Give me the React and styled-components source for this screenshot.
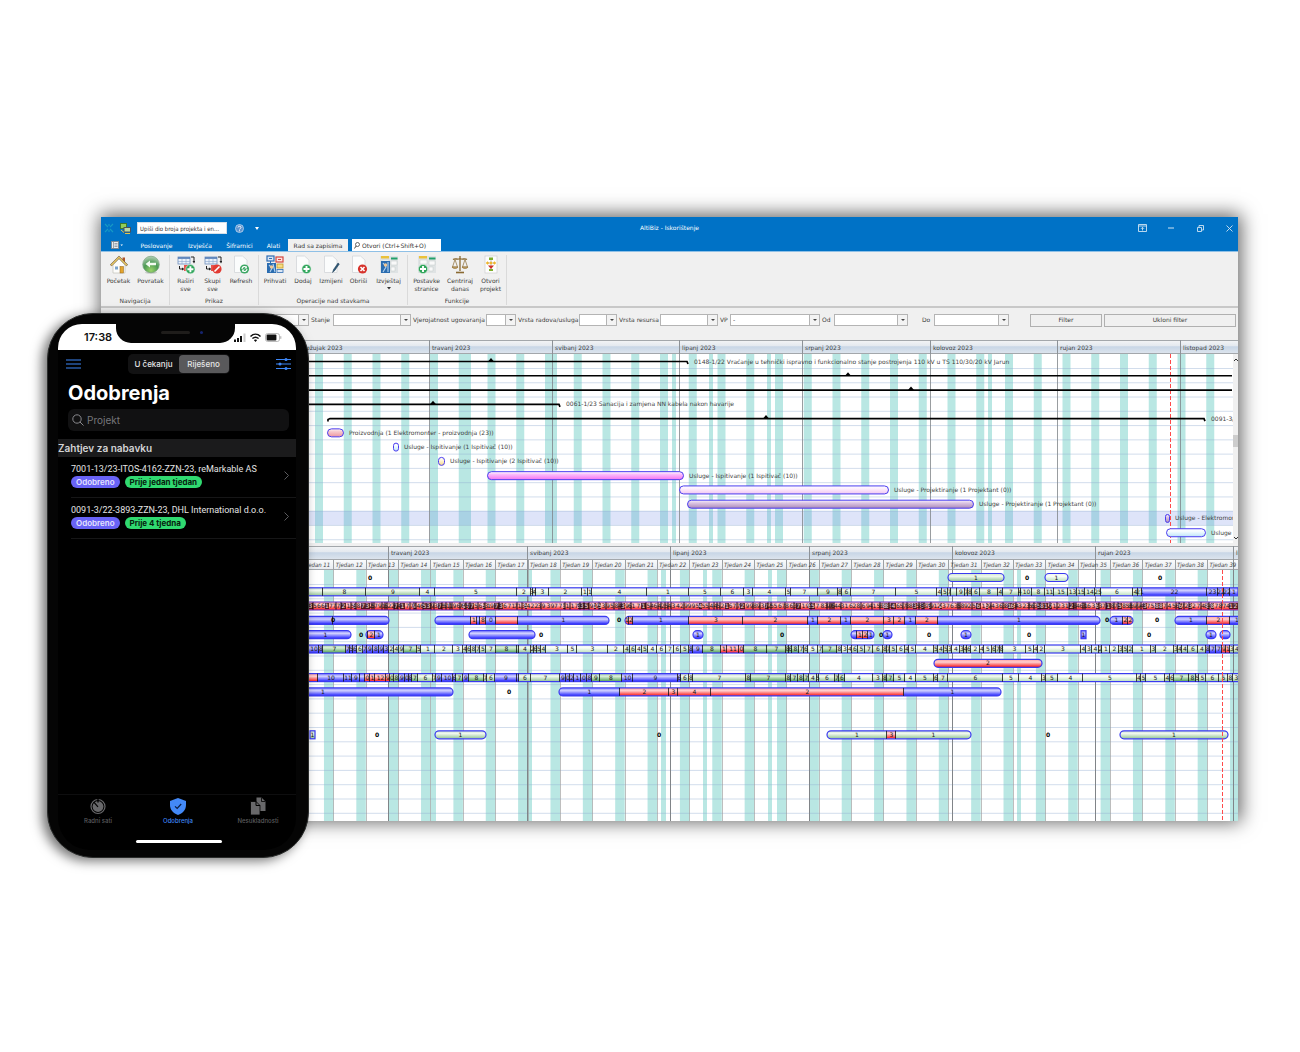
import React from "react";
import styled, { createGlobalStyle, css } from "styled-components";

const DESKTOP_FONT = '"DejaVu Sans", Verdana, sans-serif';
const NARROW_FONT = '"DejaVu Sans Condensed", "DejaVu Sans", sans-serif';
const PHONE_FONT = 'Inter, "Liberation Sans", sans-serif';
const BLUE = "#0072c6";

const Global = createGlobalStyle`
  * { box-sizing: border-box; }
  body { margin: 0; background: #fff; }
  button, input, select { font: inherit; color: inherit; margin: 0; }
`;

const Page = styled.main`
  position: relative;
  min-height: 100vh;
  padding: 217px 62px 60px 101px;
`;

/* ---------- desktop window ---------- */

const Window = styled.section`
  display: flex;
  flex-direction: column;
  background: #f0f0f0;
  color: #3c3c3c;
  font: 6px/8px ${DESKTOP_FONT};
  box-shadow: 1px -1px 18px 2px rgba(0, 0, 0, 0.62);
`;

const TitleBar = styled.header`
  display: grid;
  grid-template-columns: 1fr auto 1fr;
  align-items: center;
  height: 22px;
  background: ${BLUE};
  color: #fff;
`;

const QuickAccess = styled.div`
  display: flex;
  align-items: center;
  gap: 6px;
  padding-left: 3px;
`;

const QuickInput = styled.input`
  width: 90px;
  height: 12px;
  padding: 0 2px;
  border: 1px solid #d5dfe8;
  border-radius: 0;
  background: #fff;
  color: #333;
  font-family: ${NARROW_FONT};
`;

const Title = styled.h1`
  margin: 0;
  font-size: 6px;
  font-weight: 400;
`;

const WindowButtons = styled.div`
  display: flex;
  justify-content: flex-end;
  gap: 17px;
  padding-right: 3px;
`;

const IconButton = styled.button`
  display: grid;
  place-items: center;
  width: ${(p) => p.$w || 12}px;
  height: 12px;
  padding: 0;
  border: 0;
  background: none;
  color: inherit;
`;

const TabBar = styled.nav`
  display: flex;
  height: 13px;
  background: ${BLUE};
  border-bottom: 1px solid #8fc0e6;
  color: #fff;
`;

const Tab = styled.button`
  width: ${(p) => p.$w}px;
  padding: 1px 0 0;
  border: 0;
  white-space: nowrap;
  background: ${(p) => (p.$active ? "#f0f0f0" : "none")};
  color: ${(p) => (p.$active ? "#333" : "#fff")};
`;

const CommandSearch = styled.label`
  display: flex;
  align-items: center;
  gap: 2px;
  width: 89px;
  margin-left: 4px;
  padding: 1px 2px 0;
  background: #fff;
  color: #333;
  input {
    flex: 1;
    min-width: 0;
    padding: 0;
    border: 0;
    background: none;
  }
  input::placeholder { color: #333; opacity: 1; }
`;

const Ribbon = styled.div`
  display: flex;
  height: 56px;
  padding-top: 3px;
  border-bottom: 2px solid #c8c8c8;
`;

const Group = styled.div`
  display: flex;
  flex-direction: column;
  padding: 0 2px;
  margin-bottom: 1px;
  border-right: 1px solid #dadada;
`;

const GroupTools = styled.div`
  display: flex;
  flex: 1;
`;

const GroupName = styled.div`
  text-align: center;
`;

const Tool = styled.button`
  display: flex;
  flex-direction: column;
  align-items: center;
  width: ${(p) => p.$w}px;
  padding: 0;
  border: 0;
  background: none;
  line-height: 8px;
  white-space: nowrap;
  svg { flex: none; margin-bottom: 2px; }
`;

const Filters = styled.form`
  display: flex;
  align-items: center;
  height: 32px;
  padding: 0 2px 8px 8px;
`;

const Field = styled.label`
  display: flex;
  align-items: center;
  white-space: nowrap;
  margin-left: ${(p) => p.$gap || 2}px;
`;

const FieldName = styled.span`
  width: ${(p) => p.$w}px;
`;

const SelectBox = styled.span`
  position: relative;
  display: block;
  width: ${(p) => p.$w}px;
  height: 12px;
  border: 1px solid #b4b4b4;
  background: #fff;
  select {
    appearance: none;
    display: block;
    width: 100%;
    height: 10px;
    padding: 0 2px;
    border: 0;
    border-radius: 0;
    background: none;
  }
  &::before {
    content: "";
    position: absolute;
    inset: 0 0 0 auto;
    width: 9px;
    border-left: 1px solid #b4b4b4;
    background: #f3f3f3;
    pointer-events: none;
  }
  &::after {
    content: "";
    position: absolute;
    right: 2px;
    top: 4px;
    border: 2px solid transparent;
    border-top-color: #444;
    border-bottom: 0;
    pointer-events: none;
  }
`;

const FilterButton = styled.button`
  height: 13px;
  padding: 0;
  border: 1px solid #b0b0b0;
  background: #f0f0f0;
  ${(p) =>
    p.$grow
      ? css`
          flex: 1;
          margin-left: 2px;
        `
      : css`
          width: 72px;
          margin-left: 21px;
        `}
`;

const Charts = styled.div`
  display: flex;
  flex-direction: column;
  gap: 3px;
`;

const ChartSvg = styled.svg`
  display: block;
  width: 100%;
  height: ${(p) => p.$h}px;
  overflow: hidden;
  text { font: 6px ${DESKTOP_FONT}; fill: #3f3f3f; }
  .week { font-family: ${NARROW_FONT}; font-style: italic; }
  .mid { text-anchor: middle; }
  .num { text-anchor: middle; fill: #151515; }
  .pale { text-anchor: middle; fill: #f3dcdc; }
  .free { text-anchor: middle; fill: #000; font-weight: 700; }
`;

/* ---------- ribbon icons ---------- */

const Svg = ({ w = 18, h = 20, vb = "0 0 18 20", children }) => (
  <svg width={w} height={h} viewBox={vb} fill="none" aria-hidden="true">
    {children}
  </svg>
);

const Plus = ({ x, y }) => (
  <g>
    <circle cx={x} cy={y} r="4.6" fill="#2fa55a" stroke="#d8efe0" strokeWidth=".6" />
    <path d={`M${x - 3} ${y}h6M${x} ${y - 3}v6`} stroke="#fff" strokeWidth="1.9" />
  </g>
);

const Sheet = () => (
  <path d="M2.500 1h8l4.500 4v12.500H2.500z" fill="#fbfcfc" stroke="#d3d6d9" strokeWidth=".8" />
);

const TableArrows = () => (
  <g>
    <rect x="1" y="2" width="12" height="7" fill="#eaf1fa" stroke="#6f90bd" strokeWidth=".8" />
    <path d="M1 3h12" stroke="#4d78b4" strokeWidth="1.6" />
    <path d="M5 4v5M9 4v5M1 6.500h12" stroke="#8aa7cf" strokeWidth=".6" />
    <path d="M14 2h3v5M2.500 11v3h3" stroke="#222" strokeWidth="1" />
    <path d="M15.500 6h3l-1.500 2.500zM5 12.500v3l2.500-1.500z" fill="#222" />
    <rect x="7" y="10" width="5" height="6" fill="#e8554e" />
  </g>
);

const Panels = () => (
  <g>
    <rect x="0" y="1" width="18" height="17" fill="#dfe3e4" />
    <rect x="1" y="1" width="8" height="2.500" fill="#eac13a" />
    <rect x="11" y="2.500" width="6.500" height="2" fill="#22a06a" />
    <path d="M2 5h7v4H2zM11 6h6v4h-6zM11 12h4v4h-4z" fill="#f9f9f9" stroke="#c3c8ca" strokeWidth=".5" />
  </g>
);

const ICONS = {
  home: (
    <g>
      <path d="M3 10v8h12v-8L9 4z" fill="#fdfdfb" stroke="#b9b9b0" strokeWidth=".6" />
      <path d="M12.500 2.500h2.500v5l-2.500-2z" fill="#b0532b" />
      <path d="M.8 10.500 9 2.300l8.200 8.200" stroke="#6a5537" strokeWidth="2.200" />
      <path d="M1.200 10.200 9 2.400l7.800 7.800" stroke="#efcf68" strokeWidth="1.300" />
      <rect x="10" y="11.500" width="3.500" height="6.500" fill="#e4a52d" stroke="#90621b" strokeWidth=".5" />
      <rect x="5" y="11.500" width="3" height="3" fill="#7aa3ce" />
    </g>
  ),
  back: (
    <g>
      <ellipse cx="9" cy="17.500" rx="6" ry="1.300" fill="#c9ccc9" />
      <circle cx="9" cy="9.500" r="8.300" fill="url(#backBall)" stroke="#6f9a74" strokeWidth=".6" />
      <path d="M3.500 9 8 5.500v2.200h6v2.600H8v2.200z" fill="#f4fbf2" />
    </g>
  ),
  expand: (
    <g>
      <TableArrows />
      <Plus x={13.400} y={14.200} />
    </g>
  ),
  collapse: (
    <g>
      <TableArrows />
      <circle cx="13" cy="14" r="4.600" fill="#e23b33" />
      <path d="m10.500 16.500 5-5" stroke="#fff" strokeWidth="1.600" />
    </g>
  ),
  refresh: (
    <g>
      <Sheet />
      <circle cx="12.500" cy="14" r="4.600" fill="#3da764" />
      <path d="M10 14a2.500 2.500 0 0 1 4.500-1.500M15 14a2.500 2.500 0 0 1-4.500 1.500" stroke="#fff" strokeWidth="1.100" />
      <path d="M14.800 11v2.500h-2.500zM10.200 17v-2.500h2.500z" fill="#fff" />
    </g>
  ),
  accept: (
    <g>
      <rect x="1" y="1" width="7" height="5" fill="#d9e6f5" stroke="#2e6db4" strokeWidth="1.200" />
      <path d="M3 3.500h3M4.500 6v2" stroke="#2e6db4" />
      <rect x="10" y="2" width="7" height="5" fill="#fbe3e1" stroke="#d6453d" strokeWidth="1.200" />
      <path d="M12 4.500h3" stroke="#d6453d" />
      <rect x="1" y="8" width="9" height="10" fill="#2a6cb0" />
      <path d="m3 10 3 3-2 4M7 9l2 8" stroke="#b4d3ef" strokeWidth="1.100" />
      <circle cx="5.500" cy="12" r="1.700" fill="#efc694" />
      <rect x="11" y="9" width="6" height="4" fill="#f6dc81" stroke="#c89a26" strokeWidth=".8" />
      <rect x="11" y="14.500" width="6" height="3" fill="#d9e6f5" stroke="#2e6db4" strokeWidth=".8" />
    </g>
  ),
  add: (
    <g>
      <Sheet />
      <Plus x={12.500} y={14} />
    </g>
  ),
  edit: (
    <g>
      <Sheet />
      <path d="m10.500 17.500 1-3 4.500-6.500 1.300 1-4.500 6.500z" fill="#2d5878" stroke="#1b3850" strokeWidth=".5" />
    </g>
  ),
  remove: (
    <g>
      <Sheet />
      <circle cx="12.500" cy="14" r="4.600" fill="#d6322b" />
      <path d="m10.500 12 4 4m0-4-4 4" stroke="#fff" strokeWidth="1.600" />
    </g>
  ),
  report: (
    <g>
      <Panels />
      <rect x="1" y="6" width="9" height="12" fill="#2a6cb0" />
      <path d="m3 8 3 4-3 5M8 7v10" stroke="#b4d3ef" strokeWidth="1.100" />
      <circle cx="5.500" cy="10" r="1.700" fill="#efc694" />
    </g>
  ),
  settings: (
    <g>
      <Panels />
      <Plus x={5} y={14} />
    </g>
  ),
  scales: (
    <g stroke="#8a6a32" strokeWidth="1">
      <path d="M9 1v15M2 4.500c3-2 4 1 7-1 3 2 4-1 7 1" strokeWidth="1.300" />
      <path d="M4 4.500 1.500 12h5zM14 4.500 11.500 12h5z" strokeWidth=".7" />
      <path d="M1 12h6c-1 2-5 2-6 0zM11 12h6c-1 2-5 2-6 0z" fill="#c9a765" strokeWidth=".6" />
      <path d="M5 17.500h8" strokeWidth="1.600" />
    </g>
  ),
  project: (
    <g>
      <rect x="3" y="1" width="12" height="17" fill="#fdfdfd" stroke="#cfcfcf" strokeWidth=".7" />
      <path d="M9 3v12M5 8h8" stroke="#aaa" strokeWidth=".7" />
      <rect x="7" y="2.500" width="4" height="2.500" fill="#7fae2d" />
      <path d="m5.500 6.300 1.700 1.700-1.700 1.700L3.800 8zM9 6.300 10.700 8 9 9.700 7.300 8zM12.500 6.300 14.200 8l-1.700 1.700L10.800 8z" fill="#efb52c" />
      <path d="M6 10.500h6L9 14z" fill="#cf2e27" />
      <rect x="7" y="14" width="4" height="2" fill="#7fae2d" />
    </g>
  ),
};

const ToolButton = ({ icon, w, children, arrow }) => (
  <Tool type="button" $w={w}>
    <Svg>{ICONS[icon]}</Svg>
    {children}
    {arrow && (
      <svg width="4" height="6" viewBox="0 0 4 6" aria-hidden="true">
        <path d="M0 2h4L2 4.500z" fill="#333" />
      </svg>
    )}
  </Tool>
);

const FilterField = ({ name, labelWidth, width, gap, value = "" }) => (
  <Field $gap={gap}>
    <FieldName $w={labelWidth}>{name}</FieldName>
    <SelectBox $w={width}>
      <select defaultValue={value} aria-label={name}>
        <option value={value}>{value}</option>
      </select>
    </SelectBox>
  </Field>
);

/* ---------- timeline data ---------- */

const ORIGIN = 101;

const MONTHS_TOP = [
  [304, "ožujak 2023"],
  [430, "travanj 2023"],
  [553, "svibanj 2023"],
  [680, "lipanj 2023"],
  [803, "srpanj 2023"],
  [931, "kolovoz 2023"],
  [1058, "rujan 2023"],
  [1181, "listopad 2023"],
];

const MONTHS_BOTTOM = [
  [389, "travanj 2023"],
  [528, "svibanj 2023"],
  [671, "lipanj 2023"],
  [810, "srpanj 2023"],
  [953, "kolovoz 2023"],
  [1096, "rujan 2023"],
  [1234, "listopad 2023"],
];

const HOLIDAYS_TOP = [[466, 5], [553, 4], [672, 4], [709, 4], [767, 4], [988, 4]];
const HOLIDAYS_BOTTOM = [[431, 5], [528, 4], [661, 5], [703, 4], [768, 4], [1017, 4]];

const SUMMARIES = [
  { row: 0, from: 250, to: 688, peak: 491, text: "0148-1/22 Vraćanje u tehnički ispravno i funkcionalno stanje postrojenja 110 kV u TS 110/30/20 kV Jarun", textX: 694, hookEnd: true },
  { row: 1, from: 250, to: 1233, peak: 848 },
  { row: 2, from: 250, to: 1233, peak: 911 },
  { row: 3, from: 250, to: 560, peak: 433, text: "0061-1/23 Sanacija i zamjena NN kabela nakon havarije", textX: 566, hookEnd: true },
  { row: 4, from: 328, to: 1205, peak: 766, text: "0091-3/22", textX: 1211, hookStart: true, hookEnd: true },
];

const TASKS = [
  { row: 5, x: 327, w: 17, fill: "pink", text: "Proizvodnja (1 Elektromonter - proizvodnja (23))" },
  { row: 6, x: 393, w: 6, fill: "ice", text: "Usluge - Ispitivanje (1 Ispitivač (10))" },
  { row: 7, x: 438, w: 7, fill: "cream", text: "Usluge - Ispitivanje (2 Ispitivač (10))" },
  { row: 8, x: 487, w: 197, fill: "magenta", text: "Usluge - Ispitivanje (1 Ispitivač (10))" },
  { row: 9, x: 679, w: 210, fill: "rose", text: "Usluge - Projektiranje (1 Projektant (0))" },
  { row: 10, x: 687, w: 287, fill: "plum", text: "Usluge - Projektiranje (1 Projektant (0))" },
  { row: 11, x: 1165, w: 5, fill: "plum", text: "Usluge - Elektromonter" },
  { row: 12, x: 1166, w: 40, fill: "ice", text: "Usluge" },
];

const GRADIENTS = {
  pink: ["#fff2f2", "#f7c9cd", "#ee9da6"],
  ice: ["#ffffff", "#f4fbff", "#c5e8fa"],
  cream: ["#ffffff", "#fff6dc", "#f7dc94"],
  magenta: ["#ffffff", "#fbbcfb", "#f57df3"],
  rose: ["#ffffff", "#fdeefd", "#f3cdf3"],
  plum: ["#f7f0fb", "#dcc4e3", "#b192c0"],
  b: ["#8a8aff", "#cfcfff", "#3c3cff"],
  r: ["#ffa0a0", "#ffd0d0", "#fb3030"],
  g: ["#cfe6cf", "#f0f8ee", "#9fcb9f"],
  l: ["#eef8ee", "#fafdf9", "#c2e4c4"],
  d: ["#a8d2a8", "#d8eed8", "#62ab66"],
};

/* Load bars: [row, rounded, start, "end:colour:label ..."] */
const LOADS = [
  [0, 1, 948, "1004:g:1"],
  [0, 1, 1045, "1068:l:1"],
  [1, 0, 250, "323:g: 366:g:8 420:g:9 435:l:4 517:l:5 531:l:2 533:l:3 536:l:4 549:l:3 582:l:2 588:l:1 592:l:1 647:l:4 689:l:1 721:l:5 744:l:6 753:l:3 786:l:4 791:l:5 818:l:7 838:g:9 842:g:8 851:g:6 896:l:7 937:l:5 942:l:4 948:g:5 951:g:7 957:g: 965:g:9 968:g:7 972:g:8 980:g:6 998:g:8 1003:g:4 1019:g:7 1021:g:4 1032:g:10 1045:g:8 1054:g:11 1068:g:15 1077:g:13 1085:g:15 1095:g:14 1101:g:25 1133:l:6 1138:g:4 1142:g:21 1207:b:22 1218:b:23 1224:b:22 1230:b:22 1238:b:1"],
  [3, 1, 250, "333:b: 389:b:"],
  [3, 1, 435, "471:b: 477:r:1 480:b: 486:r:8 496:b:0 518:r: 609:b:1"],
  [3, 1, 625, "629:r:1 633:r:2 689:b:1 743:r:3 808:r:2 818:b:1 841:r:2 851:b:1 884:r:2 894:r:3 905:r:2 916:b:1 938:r:2 1100:b:1"],
  [3, 1, 1110, "1123:b:1 1128:r:2 1133:r:2"],
  [3, 1, 1175, "1207:b:1 1230:r:2 1244:b:1"],
  [4, 1, 300, "351:b:1"],
  [4, 1, 366, "368:b: 375:r:2 383:b:1"],
  [4, 1, 469, "535:b:"],
  [4, 1, 693, "703:b:1"],
  [4, 1, 851, "857:b: 863:r:1 868:r:2 874:b:1"],
  [4, 1, 883, "892:b:1"],
  [4, 1, 961, "971:b:1"],
  [4, 0, 1081, "1086:b:1"],
  [4, 1, 1206, "1216:b:1"],
  [4, 1, 1220, "1230:b:"],
  [5, 0, 250, "309:b: 319:b:10 323:b:8 346:d:7 350:b:7 353:b:5 357:b:6 363:g:6 367:b:7 373:b:9 379:b:8 384:b:9 389:b:3 394:g:2 399:g:4 404:g:9 417:d:7 421:g:5 435:l:1 453:l:2 463:l:3 467:g:4 471:g:6 476:g:8 480:g:7 486:g:5 496:g:7 517:d:8 519:d: 531:g:4 534:g:2 537:g:6 541:g:5 546:g:4 568:l:3 577:l:5 608:l:3 624:l:2 630:g:4 636:g:6 642:l:4 648:g:5 657:l:4 666:l:6 674:l:7 681:l:6 689:g:5 693:b:8 703:b:9 721:d:8 727:r:1 739:r:11 744:r:0 767:d:8 786:d:7 789:d:8 792:d:6 799:d:8 804:g:7 808:g:6 818:l:5 823:g:7 837:d:7 842:g:8 848:l:3 852:l:4 858:g:6 865:g:5 873:g:7 883:g:6 887:g:8 890:g:7 897:g:5 905:l:6 909:g:4 916:l:5 934:l:4 938:g:5 944:g:4 948:g:5 952:g:3 960:l:4 964:g:3 967:g:4 971:g:6 980:l:2 984:l:4 992:l:5 996:g:6 1000:g:7 1003:g:8 1026:l:3 1034:l:5 1038:l:4 1045:l:2 1081:l:3 1086:l:4 1092:l:3 1099:l:4 1102:g:2 1110:l:1 1119:l:2 1123:g:3 1128:g:5 1133:g:2 1151:l:1 1156:g:3 1174:l:2 1178:g:3 1182:g:4 1188:g:4 1198:g:6 1206:g:4 1210:b:8 1216:b:7 1222:b:7 1226:r:9 1230:r:1 1234:g:3 1240:g:4"],
  [6, 1, 934, "1042:r:2"],
  [7, 0, 250, "318:r: 344:b:10 352:b:11 360:b:9 365:b: 370:r:0 375:r:1 386:r:12 390:r:9 394:d:0 399:d:8 405:b:9 409:b:0 412:b:8 418:d:7 433:g:6 436:g:7 442:b:9 453:b:10 456:b:6 463:d:7 469:b:9 484:d:8 487:g:7 495:g:6 517:b:9 519:b: 531:g:6 560:g:7 566:b:9 570:b:0 574:b:2 581:b:1 587:b:0 592:b:8 600:d:9 622:d:8 633:b:10 678:b:9 681:b:6 689:g:6 693:g:8 746:g:7 751:d:8 786:d:7 791:d:8 798:d:7 804:d:8 809:d:7 817:g:4 819:g:5 835:g:6 839:d:7 845:d:6 873:l:4 883:g:3 887:d:8 894:d:7 905:g:5 916:l:4 934:g:5 938:g:6 948:g:7 1003:g:6 1019:l:5 1042:l:4 1046:g:3 1058:g:5 1083:l:4 1137:l:5 1141:g:4 1146:g:5 1165:l:5 1170:g:4 1174:g:6 1189:d:7 1196:d:8 1199:g:5 1206:g:5 1219:g:6 1228:g:5 1233:g:8 1240:g:3"],
  [8, 1, 193, "453:b:1"],
  [8, 1, 559, "620:b:1 669:r:2 678:r:3 711:r:4 904:r:2 1001:b:1"],
  [11, 0, 310, "315:g:1"],
  [11, 1, 435, "486:g:1"],
  [11, 1, 827, "887:g:1 896:r:3 971:g:1"],
  [11, 1, 1120, "1228:g:1"],
];

const FREE = [
  [0, [370, 1027, 1160]],
  [3, [333, 619, 1107, 1157]],
  [4, [361, 541, 782, 881, 929, 1029, 1149]],
  [8, [509]],
  [11, [377, 659, 1048]],
];

/* The overloaded resource row: very short red intervals with crowded numbers. */
const DENSE = (() => {
  const out = [];
  let seed = 83;
  let x = 250;
  while (x < 1240) {
    seed = (seed * 1103515245 + 12345) % 2147483648;
    const r = Math.floor(seed / 65536);
    const w = 2 + (r % 4);
    out.push({ x, w, n: 1 + (r % 9), line: r % 5 < 2, dark: r % 13 < 3 });
    x += w;
  }
  return out;
})();

const Defs = ({ id }) => (
  <defs>
    {Object.entries(GRADIENTS).map(([k, c]) => (
      <linearGradient key={k} id={`${id}-${k}`} x1="0" y1="0" x2="0" y2="1">
        <stop offset="0" stopColor={c[0]} />
        <stop offset=".35" stopColor={c[1]} />
        <stop offset=".9" stopColor={c[2]} />
      </linearGradient>
    ))}
    <linearGradient id={`${id}-head`} x1="0" y1="0" x2="0" y2="1">
      <stop offset="0" stopColor="#f4f5f6" />
      <stop offset=".42" stopColor="#e4e9ef" />
      <stop offset=".48" stopColor="#c8d6e6" />
      <stop offset="1" stopColor="#dfe6ee" />
    </linearGradient>
    <linearGradient id={`${id}-sub`} x1="0" y1="0" x2="0" y2="1">
      <stop offset="0" stopColor="#fafbfc" />
      <stop offset="1" stopColor="#e6eaef" />
    </linearGradient>
  </defs>
);

const TOP_PITCH = 14.27;
const BOTTOM_PITCH = 14.3;

function ProjectTimeline() {
  const rowY = (r) => 21.500 + r * TOP_PITCH;
  return (
    <ChartSvg $h={203} role="img" aria-label="Projekti">
      <Defs id="top" />
      <g transform={`translate(${-ORIGIN} 0)`}>
        <rect x="101" y="14" width="4000" height="189" fill="#fff" />
        {Array.from({ length: 120 }, (_, k) => (
          <rect key={k} x={85 + k * 28.75} y="14" width="8" height="189" fill="#b9e7e3" />
        ))}
        {HOLIDAYS_TOP.map(([x, w]) => (
          <rect key={x} x={x} y="14" width={w} height="189" fill="#b9e7e3" />
        ))}
        <rect x="101" y="171" width="4000" height="14" fill="#7d94e6" fillOpacity=".25" />
        {Array.from({ length: 13 }, (_, k) => (
          <path key={k} d={`M101 ${28.5 + k * TOP_PITCH}H4000`} stroke="#8fa9cf" strokeOpacity=".4" />
        ))}
        {MONTHS_TOP.map(([x]) => (
          <path key={x} d={`M${x - 0.5} 14V203`} stroke="#808488" strokeOpacity=".8" />
        ))}
        <path d="M1170.500 14V203" stroke="#ff4a4a" strokeDasharray="4 2" />

        <rect x="101" y="0" width="4000" height="14" fill="url(#top-head)" />
        <path d="M101 .5H4100M101 13.500H4100" stroke="#a3a7ab" />
        {MONTHS_TOP.map(([x, label]) => (
          <g key={x}>
            <path d={`M${x - 0.5} 0V14`} stroke="#8d9297" />
            <text x={x + 2} y="10">{label}</text>
          </g>
        ))}

        {SUMMARIES.map((s) => {
          const y = rowY(s.row);
          return (
            <g key={s.row}>
              <path
                d={`${s.hookStart ? `M${s.from} ${y + 3}v-2l2-1` : `M${s.from} ${y}`}H${s.to - 1}${s.hookEnd ? "l1 2.500" : ""}`}
                stroke="#000"
                strokeWidth="1.700"
                fill="none"
              />
              <path d={`M${s.peak - 3} ${y}l3-3.500 3 3.500z`} fill="#000" />
              {s.text && <text x={s.textX} y={y + 2}>{s.text}</text>}
            </g>
          );
        })}
        {TASKS.map((t) => {
          const y = rowY(t.row);
          return (
            <g key={t.row}>
              <rect
                x={t.x + 0.5}
                y={y - 4}
                width={t.w - 1}
                height="8"
                rx={Math.min(4, (t.w - 1) / 2)}
                fill={`url(#top-${t.fill})`}
                stroke="#4a3cf0"
              />
              <text x={t.x + t.w + 5} y={y + 2}>{t.text}</text>
            </g>
          );
        })}
      </g>
      <svg x="100%" overflow="visible">
        <rect x="-5" y="14" width="5" height="189" fill="#f0f0f0" />
        <rect x="-5" y="95" width="5" height="12" fill="#cdcdcd" />
        <path d="M-4 21l2-2 2 2M-4 197l2 2 2-2" stroke="#333" fill="none" />
      </svg>
    </ChartSvg>
  );
}

const LoadBar = ({ row, rounded, start, spec }) => {
  const y = 27.500 + row * BOTTOM_PITCH;
  let x = start;
  const parts = spec.split(" ").map((item) => {
    const [end, color, label] = item.split(":");
    const part = { x, end: Number(end), color, label };
    x = part.end;
    return part;
  });
  const id = `clip-${row}-${start}`;
  const rx = rounded ? Math.min(4, (x - start) / 2) : 0;
  return (
    <g>
      <clipPath id={id}>
        <rect x={start} y={y} width={x - start} height="8" rx={rx} />
      </clipPath>
      <g clipPath={`url(#${id})`}>
        {parts.map((p) => (
          <rect key={p.x} x={p.x} y={y} width={p.end - p.x} height="8" fill={`url(#load-${p.color})`} />
        ))}
      </g>
      <rect x={start} y={y} width={x - start} height="8" rx={rx} fill="none" stroke="#3a3af0" strokeWidth="1.200" />
      {parts.slice(0, -1).map((p) => (
        <path key={p.end} d={`M${p.end - 0.500} ${y}v8`} stroke="#111" strokeWidth=".8" />
      ))}
      {parts.map((p) => p.label && (
        <text key={p.x} className="num" x={(p.x + p.end) / 2} y={y + 6}>{p.label}</text>
      ))}
    </g>
  );
};

function ResourceTimeline() {
  return (
    <ChartSvg $h={275} role="img" aria-label="Resursi">
      <Defs id="load" />
      <g transform={`translate(${-ORIGIN} 0)`}>
        <rect x="101" y="24" width="4000" height="251" fill="#fff" />
        {Array.from({ length: 110 }, (_, k) => (
          <rect key={k} x={129 + k * 32.360 + 0.800} y="24" width="9.500" height="251" fill="#b9e7e3" />
        ))}
        {HOLIDAYS_BOTTOM.map(([x, w]) => (
          <rect key={x} x={x} y="24" width={w} height="251" fill="#b9e7e3" />
        ))}
        {Array.from({ length: 17 }, (_, k) => (
          <path key={k} d={`M101 ${38.500 + k * BOTTOM_PITCH}H4100`} stroke="#8fa9cf" strokeOpacity=".4" />
        ))}
        {Array.from({ length: 110 }, (_, k) => (
          <path key={k} d={`M${Math.round(139.200 + k * 32.360) + 0.500} 24V275`} stroke="#9b9b9b" strokeOpacity=".65" />
        ))}
        {MONTHS_BOTTOM.map(([x]) => (
          <path key={x} d={`M${x - 0.500} 24V275`} stroke="#808488" />
        ))}

        <rect x="101" y="0" width="4000" height="14" fill="url(#load-head)" />
        <rect x="101" y="14" width="4000" height="10" fill="url(#load-sub)" />
        <path d="M101 .5H4100M101 13.500H4100M101 23.500H4100" stroke="#a3a7ab" />
        <text x="272" y="9">ožujak 2023</text>
        {MONTHS_BOTTOM.map(([x, label]) => (
          <g key={x}>
            <path d={`M${x - 0.500} 0V24`} stroke="#8d9297" />
            <text x={x + 2} y="9">{label}</text>
          </g>
        ))}
        {Array.from({ length: 34 }, (_, k) => (
          <g key={k}>
            <path d={`M${Math.round(139.200 + k * 32.360) + 0.500} 14V24`} stroke="#9da1a5" />
            <text className="week mid" x={155 + k * 32.360} y="21">{`Tjedan ${k + 6}`}</text>
          </g>
        ))}

        {LOADS.map(([row, rounded, start, spec]) => (
          <LoadBar key={`${row}-${start}`} row={row} rounded={rounded} start={start} spec={spec} />
        ))}

        <rect x="101" y="56" width="4000" height="8" fill="url(#load-r)" />
        {DENSE.map((d) => (
          <g key={d.x}>
            {d.dark && <rect x={d.x} y="57" width={d.w} height="6" fill="#2a0a12" fillOpacity=".8" />}
            {d.line && <path d={`M${d.x} 56v8`} stroke="#1c0508" />}
            <text className={d.dark ? "pale" : "num"} x={d.x + d.w / 2} y="62">{d.n}</text>
          </g>
        ))}
        <rect x="101" y="56" width="4000" height="8" fill="none" stroke="#5a2fc8" />

        {FREE.map(([row, xs]) =>
          xs.map((x) => (
            <text key={`${row}-${x}`} className="free" x={x} y={33.500 + row * BOTTOM_PITCH}>0</text>
          ))
        )}
        <path d="M1222.500 24V275" stroke="#ff4a4a" strokeDasharray="4 2" />
      </g>
    </ChartSvg>
  );
}

/* ---------- phone ---------- */

const Phone = styled.aside`
  position: absolute;
  left: 47px;
  top: 313px;
  display: flex;
  width: 262px;
  height: 545px;
  padding: 10px 12px 7px 10px;
  border: 1px solid #2b2d2c;
  border-radius: 46px;
  background: #050505;
  box-shadow: -5px 3px 12px rgba(0, 0, 0, 0.55);
  color: #fff;
  font: 9px/12px ${PHONE_FONT};
`;

const Screen = styled.div`
  position: relative;
  display: flex;
  flex: 1;
  min-width: 0;
  flex-direction: column;
  overflow: hidden;
  border-radius: 24px 24px 32px 32px;
  background: #000;
`;

const Notch = styled.div`
  position: absolute;
  top: 0;
  left: 58px;
  width: 119px;
  height: 19px;
  border-radius: 0 0 15px 15px;
  background: #050505;
  &::before {
    content: "";
    position: absolute;
    left: 45px;
    top: 7px;
    width: 29px;
    height: 3px;
    border-radius: 2px;
    background: #1f1d1b;
  }
  &::after {
    content: "";
    position: absolute;
    left: 84px;
    top: 7px;
    width: 3px;
    height: 3px;
    border-radius: 50%;
    background: #16246e;
  }
`;

const StatusBar = styled.div`
  display: flex;
  align-items: center;
  justify-content: space-between;
  height: 26px;
  padding: 0 14px 0 26px;
  background: #fff;
  color: #111;
  font-size: 11px;
  font-weight: 600;
`;

const PhoneToolbar = styled.div`
  display: flex;
  align-items: center;
  justify-content: space-between;
  height: 28px;
  padding: 0 5px 0 8px;
`;

const Segments = styled.div`
  display: flex;
  width: 102px;
  height: 20px;
  padding: 1px;
  border-radius: 5px;
  background: #121213;
`;

const Segment = styled.button`
  flex: 1;
  padding: 0;
  border: 0;
  border-radius: 4px;
  font-size: 8px;
  font-weight: 500;
  color: #e6e6e6;
  background: ${(p) => (p.$active ? "#59595b" : "none")};
`;

const PhoneTitle = styled.h2`
  margin: 2px 10px 3px;
  font-size: 20px;
  line-height: 26px;
  font-weight: 700;
`;

const SearchField = styled.label`
  display: flex;
  align-items: center;
  gap: 3px;
  height: 22px;
  margin: 0 7px 8px 10px;
  padding: 0 4px;
  border-radius: 6px;
  background: #111112;
  color: #8a8a8e;
  font-size: 10px;
  input {
    flex: 1;
    min-width: 0;
    padding: 0;
    border: 0;
    background: none;
  }
  input::placeholder { color: #77777b; opacity: 1; }
`;

const SectionTitle = styled.h3`
  margin: 0;
  height: 18px;
  font-size: 10px;
  line-height: 18px;
  font-weight: 600;
  color: #d4d4d6;
  background: #1b1b1c;
`;

const Requests = styled.ul`
  margin: 0;
  padding: 0 0 0 13px;
  list-style: none;
`;

const Request = styled.li`
  display: flex;
  align-items: center;
  justify-content: space-between;
  height: 41px;
  padding: 0 7px 4px 0;
  border-bottom: 1px solid #161617;
  white-space: nowrap;
  p {
    margin: 0 0 1px;
    color: #e4e4e4;
    font-family: Roboto, ${PHONE_FONT};
    line-height: 12px;
  }
`;

const Pills = styled.div`
  display: flex;
  gap: 5px;
`;

const Pill = styled.span`
  padding: 0 5px;
  border-radius: 6px;
  font-size: 8px;
  font-weight: ${(p) => (p.$green ? 700 : 600)};
  line-height: 12px;
  color: ${(p) => (p.$green ? "#06210f" : "#e6e4ff")};
  background: ${(p) => (p.$green ? "#30d970" : "#6963f6")};
`;

const BottomTabs = styled.nav`
  display: grid;
  grid-template-columns: repeat(3, 80px);
  height: 46px;
  margin-top: auto;
  border-top: 1px solid #0e0e0f;
`;

const BottomTab = styled.a`
  display: flex;
  flex-direction: column;
  align-items: center;
  gap: 2px;
  padding-top: 2px;
  font-size: 6px;
  line-height: 8px;
  font-weight: 500;
  text-decoration: none;
  color: ${(p) => (p.$active ? "#3f87f5" : "#5c5c5f")};
`;

const HomeIndicator = styled.div`
  width: 86px;
  height: 3px;
  margin: 0 0 7px 78px;
  border-radius: 2px;
  background: #fff;
`;

const StatusIcons = () => (
  <svg width="48" height="11" viewBox="0 0 48 11" fill="none" aria-hidden="true">
    <path d="M1 7.500v2.500M4 6v4M7 4v6" stroke="#111" strokeWidth="2" />
    <path d="M10.500 1.500V10" stroke="#ccc" strokeWidth="2" />
    <path d="M16.500 4.500c3-2.900 7-2.900 10 0M18.400 6.500c2-1.700 4.200-1.700 6.200 0" stroke="#111" strokeWidth="1.500" />
    <path d="M19.800 8.100 21.500 10l1.700-1.900c-1-.8-2.400-.8-3.400 0z" fill="#111" />
    <rect x="31.500" y="1.500" width="14" height="8" rx="2.200" stroke="#aaa" strokeWidth=".8" />
    <rect x="32.600" y="2.600" width="9.800" height="5.800" rx="1" fill="#111" />
    <path d="M46.800 4.200v2.600" stroke="#aaa" />
  </svg>
);

const REQUESTS = [
  ["7001-13/23-ITOS-4162-ZZN-23, reMarkable AS", "Prije jedan tjedan"],
  ["0091-3/22-3893-ZZN-23, DHL International d.o.o.", "Prije 4 tjedna"],
];

function PhoneApp() {
  return (
    <Phone>
      <Screen>
        <StatusBar>
          <span>17:38</span>
          <StatusIcons />
        </StatusBar>
        <Notch />
        <PhoneToolbar>
          <IconButton $w={16} type="button" aria-label="Izbornik">
            <svg width="16" height="10" viewBox="0 0 16 10">
              <path d="M0 1h15M0 5h15M0 9h15" stroke="#3d86f6" strokeWidth="1.200" />
            </svg>
          </IconButton>
          <Segments>
            <Segment type="button">U čekanju</Segment>
            <Segment type="button" $active>Riješeno</Segment>
          </Segments>
          <IconButton $w={16} type="button" aria-label="Postavke">
            <svg width="15" height="12" viewBox="0 0 15 12">
              <path d="M0 1.500h15M0 6h15M0 10.500h15" stroke="#3d86f6" />
              <circle cx="10" cy="1.500" r="1.500" fill="#3d86f6" />
              <circle cx="4" cy="6" r="1.500" fill="#3d86f6" />
              <circle cx="10" cy="10.500" r="1.500" fill="#3d86f6" />
            </svg>
          </IconButton>
        </PhoneToolbar>
        <PhoneTitle>Odobrenja</PhoneTitle>
        <SearchField>
          <svg width="12" height="12" viewBox="0 0 12 12" fill="none" aria-hidden="true">
            <circle cx="5" cy="5" r="4.200" stroke="#8a8a8e" />
            <path d="m8 8 3.500 3.500" stroke="#8a8a8e" />
          </svg>
          <input type="search" placeholder="Projekt" aria-label="Projekt" />
        </SearchField>
        <SectionTitle>Zahtjev za nabavku</SectionTitle>
        <Requests>
          {REQUESTS.map(([name, age]) => (
            <Request key={name}>
              <div>
                <p>{name}</p>
                <Pills>
                  <Pill>Odobreno</Pill>
                  <Pill $green>{age}</Pill>
                </Pills>
              </div>
              <svg width="5" height="9" viewBox="0 0 5 9" fill="none" aria-hidden="true">
                <path d="m.5.5 4 4-4 4" stroke="#5c5c5f" />
              </svg>
            </Request>
          ))}
        </Requests>
        <BottomTabs>
          <BottomTab href="#sati">
            <svg width="18" height="18" viewBox="0 0 18 18" fill="none" aria-hidden="true">
              <circle cx="9" cy="9.500" r="7" stroke="#68686a" strokeWidth="1.200" />
              <circle cx="9" cy="9.500" r="5.400" fill="#68686a" />
              <path d="M9 9.800 4.800 5.200" stroke="#000" strokeWidth="1.200" />
              <path d="M9 2v3.400" stroke="#000" strokeWidth="1.400" />
            </svg>
            Radni sati
          </BottomTab>
          <BottomTab href="#odobrenja" $active>
            <svg width="18" height="18" viewBox="0 0 18 18" fill="none" aria-hidden="true">
              <path d="m9 1 8 3v4c0 5-3.500 8.300-8 10C4.500 16.300 1 13 1 8V4z" fill="#4389f7" />
              <path d="m6 9.300 2.200 2.200L12.200 7" stroke="#0a1e44" strokeWidth="1.200" />
            </svg>
            Odobrenja
          </BottomTab>
          <BottomTab href="#nesukladnosti">
            <svg width="18" height="18" viewBox="0 0 18 18" fill="none" aria-hidden="true">
              <path d="M7.500.500h5l4 4V14h-9z" fill="#68686a" />
              <path d="M12.500.500v4h4" stroke="#000" strokeWidth=".8" />
              <path d="M1.500 4.500h5.500l4 4v9.500H1.500z" fill="#68686a" stroke="#000" strokeWidth=".8" />
              <path d="M7 4.500v4h4" stroke="#000" />
            </svg>
            Nesukladnosti
          </BottomTab>
        </BottomTabs>
        <HomeIndicator />
      </Screen>
    </Phone>
  );
}

/* ---------- page ---------- */

export default function App() {
  return (
    <Page>
      <Global />
      <svg width="0" height="0" style={{ position: "absolute" }} aria-hidden="true">
        <radialGradient id="backBall" cx=".5" cy=".85" r=".8">
          <stop offset="0" stopColor="#9ad36a" />
          <stop offset=".55" stopColor="#4d9a54" />
          <stop offset="1" stopColor="#a9c9ac" />
        </radialGradient>
      </svg>
      <Window>
        <TitleBar>
          <QuickAccess>
            <svg width="10" height="10" viewBox="0 0 10 10" fill="none" aria-hidden="true">
              <path d="m1 1 3 3m5-3L6 4M1 9l3-3m5 3L6 6M5 1v2M5 7v2" stroke="#179bc4" strokeWidth="1.100" />
            </svg>
            <svg width="11" height="11" viewBox="0 0 11 11" aria-hidden="true">
              <rect x=".5" y=".5" width="6" height="5" fill="#8fce5a" stroke="#3c7a2c" />
              <rect x="4" y="4.500" width="6.500" height="4.500" fill="#b9d9a6" stroke="#49515a" />
              <path d="M5 10.500h5M1 7l3 2.500" stroke="#e3c34a" />
            </svg>
            <QuickInput aria-label="Traži projekt" defaultValue="Upiši dio broja projekta i en..." />
            <IconButton type="button" aria-label="Pomoć">
              <svg width="9" height="9" viewBox="0 0 9 9" fill="none">
                <circle cx="4.500" cy="4.500" r="4" fill="#5d93cf" stroke="#cfe2f4" strokeWidth=".7" />
                <path d="M3 3.500c.2-1.700 3-1.600 3 0 0 1-1.400 1-1.400 2M4.500 6.300v1" stroke="#fff" />
              </svg>
            </IconButton>
            <IconButton type="button" aria-label="Prilagodi">
              <svg width="4" height="3" viewBox="0 0 4 3">
                <path d="M0 0h4L2 3z" fill="#fff" />
              </svg>
            </IconButton>
          </QuickAccess>
          <Title>AltiBiz - Iskorištenje</Title>
          <WindowButtons>
            <IconButton type="button" aria-label="Vrpca">
              <svg width="9" height="8" viewBox="0 0 9 8" fill="none">
                <path d="M.5.500h8v7h-8zM.5 2h8M4.500 6.500v-3M3 4.800l1.500-1.500L6 4.800" stroke="#cfe3f3" strokeWidth=".9" />
              </svg>
            </IconButton>
            <IconButton type="button" aria-label="Smanji">
              <svg width="6" height="2" viewBox="0 0 6 2"><path d="M0 1h6" stroke="#cfe3f3" /></svg>
            </IconButton>
            <IconButton type="button" aria-label="Obnovi">
              <svg width="7" height="7" viewBox="0 0 7 7" fill="none">
                <path d="M.5 2.500h4v4h-4zM2 2V.500h4.500V5H5" stroke="#cfe3f3" strokeWidth=".9" />
              </svg>
            </IconButton>
            <IconButton type="button" aria-label="Zatvori">
              <svg width="7" height="7" viewBox="0 0 7 7"><path d="m.5.500 6 6m0-6-6 6" stroke="#cfe3f3" strokeWidth=".9" /></svg>
            </IconButton>
          </WindowButtons>
        </TitleBar>

        <TabBar>
          <Tab type="button" $w={32} aria-label="Datoteka">
            <svg width="12" height="8" viewBox="0 0 12 8">
              <rect x=".5" y=".5" width="7" height="7" fill="#e9eef2" stroke="#7d8a94" />
              <path d="M2.500 1v6M3.500 2.500h3M3.500 4h3M3.500 5.500h3" stroke="#66727c" strokeWidth=".6" />
              <path d="M9.500 3.500h2.500L10.700 5z" fill="#fff" />
            </svg>
          </Tab>
          <Tab type="button" $w={47}>Poslovanje</Tab>
          <Tab type="button" $w={40}>Izvješća</Tab>
          <Tab type="button" $w={39}>Šifrarnici</Tab>
          <Tab type="button" $w={29}>Alati</Tab>
          <Tab type="button" $w={60} $active>Rad sa zapisima</Tab>
          <CommandSearch>
            <svg width="6" height="7" viewBox="0 0 6 7" fill="none" aria-hidden="true">
              <circle cx="3.500" cy="2.500" r="2" stroke="#444" strokeWidth=".8" />
              <path d="M2.200 4 .4 6.500" stroke="#444" />
            </svg>
            <input placeholder="Otvori (Ctrl+Shift+O)" aria-label="Otvori" />
          </CommandSearch>
        </TabBar>

        <Ribbon>
          <Group>
            <GroupTools>
              <ToolButton icon="home" w={31}>Početak</ToolButton>
              <ToolButton icon="back" w={33}>Povratak</ToolButton>
            </GroupTools>
            <GroupName>Navigacija</GroupName>
          </Group>
          <Group>
            <GroupTools>
              <ToolButton icon="expand" w={27}>Raširi<br />sve</ToolButton>
              <ToolButton icon="collapse" w={27}>Skupi<br />sve</ToolButton>
              <ToolButton icon="refresh" w={30}>Refresh</ToolButton>
            </GroupTools>
            <GroupName>Prikaz</GroupName>
          </Group>
          <Group>
            <GroupTools>
              <ToolButton icon="accept" w={28}>Prihvati</ToolButton>
              <ToolButton icon="add" w={28}>Dodaj</ToolButton>
              <ToolButton icon="edit" w={28}>Izmijeni</ToolButton>
              <ToolButton icon="remove" w={27}>Obriši</ToolButton>
              <ToolButton icon="report" w={33} arrow>Izvještaj</ToolButton>
            </GroupTools>
            <GroupName>Operacije nad stavkama</GroupName>
          </Group>
          <Group>
            <GroupTools>
              <ToolButton icon="settings" w={33}>Postavke<br />stranice</ToolButton>
              <ToolButton icon="scales" w={34}>Centriraj<br />danas</ToolButton>
              <ToolButton icon="project" w={27}>Otvori<br />projekt</ToolButton>
            </GroupTools>
            <GroupName>Funkcije</GroupName>
          </Group>
        </Ribbon>

        <Filters onSubmit={(e) => e.preventDefault()}>
          <FilterField name="Projekt" labelWidth={28} width={170} />
          <FilterField name="Stanje" labelWidth={22} width={78} />
          <FilterField name="Vjerojatnost ugovaranja" labelWidth={73} width={30} />
          <FilterField name="Vrsta radova/usluga" labelWidth={61} width={38} />
          <FilterField name="Vrsta resursa" labelWidth={41} width={58} />
          <FilterField name="VP" labelWidth={10} width={90} value="-" />
          <FilterField name="Od" labelWidth={12} width={74} />
          <FilterField name="Do" labelWidth={12} width={75} gap={14} />
          <FilterButton type="submit">Filter</FilterButton>
          <FilterButton type="reset" $grow>Ukloni filter</FilterButton>
        </Filters>

        <Charts>
          <ProjectTimeline />
          <ResourceTimeline />
        </Charts>
      </Window>
      <PhoneApp />
    </Page>
  );
}
